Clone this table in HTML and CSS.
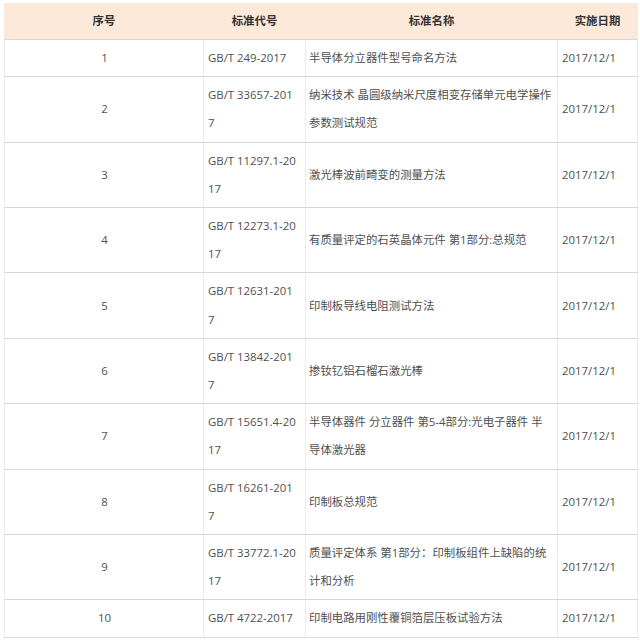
FILE: index.html
```html
<!DOCTYPE html>
<html lang="zh-CN">
<head>
<meta charset="utf-8">
<link rel="stylesheet" href="styles.css">
</head>
<body>
<table class="std">
  <colgroup>
    <col class="c1"><col class="c2"><col class="c3"><col class="c4">
  </colgroup>
  <thead>
    <tr><th>序号</th><th>标准代号</th><th>标准名称</th><th>实施日期</th></tr>
  </thead>
  <tbody>
    <tr><td class="num">1</td><td class="code">GB/T 249-2017</td><td class="name">半导体分立器件型号命名方法</td><td>2017/12/1</td></tr>
    <tr><td class="num">2</td><td class="code">GB/T 33657-2017</td><td class="name">纳米技术 晶圆级纳米尺度相变存储单元电学操作参数测试规范</td><td>2017/12/1</td></tr>
    <tr><td class="num">3</td><td class="code">GB/T 11297.1-2017</td><td class="name">激光棒波前畸变的测量方法</td><td>2017/12/1</td></tr>
    <tr><td class="num">4</td><td class="code">GB/T 12273.1-2017</td><td class="name">有质量评定的石英晶体元件 第1部分:总规范</td><td>2017/12/1</td></tr>
    <tr><td class="num">5</td><td class="code">GB/T 12631-2017</td><td class="name">印制板导线电阻测试方法</td><td>2017/12/1</td></tr>
    <tr><td class="num">6</td><td class="code">GB/T 13842-2017</td><td class="name">掺钕钇铝石榴石激光棒</td><td>2017/12/1</td></tr>
    <tr><td class="num">7</td><td class="code">GB/T 15651.4-2017</td><td class="name">半导体器件 分立器件 第5-4部分:光电子器件 半导体激光器</td><td>2017/12/1</td></tr>
    <tr><td class="num">8</td><td class="code">GB/T 16261-2017</td><td class="name">印制板总规范</td><td>2017/12/1</td></tr>
    <tr><td class="num">9</td><td class="code">GB/T 33772.1-2017</td><td class="name">质量评定体系 第1部分：印制板组件上缺陷的统计和分析</td><td>2017/12/1</td></tr>
    <tr><td class="num">10</td><td class="code">GB/T 4722-2017</td><td class="name">印制电路用刚性覆铜箔层压板试验方法</td><td>2017/12/1</td></tr>
  </tbody>
</table>
</body>
</html>
```
FILE: styles.css
```css
html, body {
  margin: 0;
  padding: 0;
  background: #ffffff;
}
body {
  font-family: "Open Sans", "Noto Sans CJK SC", sans-serif;
  font-size: 11.4px;
  color: #505050;
}
.std {
  margin: 3px 0 0 4px;
  width: 633px;
  table-layout: fixed;
  border-collapse: collapse;
}
.c1 { width: 199px; }
.c2 { width: 102px; }
.c3 { width: 252px; }
.c4 { width: 80px; }
.std th {
  background: #fde9da;
  color: #333333;
  font-weight: bold;
  text-align: center;
  line-height: 28px;
  padding: 4px 3px;
  border-bottom: 1px solid #d8d8d8;
  border-left: 1px solid #fde9da;
  border-right: 1px solid #fde9da;
}
.std td {
  line-height: 28.2px;
  padding: 4px 3px 4px 4px;
  border-bottom: 1px solid #d8d8d8;
  border-left: 1px solid #ececec;
  border-right: 1px solid #ececec;
  text-align: left;
  vertical-align: middle;
  word-break: break-all;
}
.std td.num {
  text-align: center;
}
.std td.code {
  padding-right: 7px;
}
.std td.name {
  padding-left: 3px;
  padding-right: 4px;
}
```
